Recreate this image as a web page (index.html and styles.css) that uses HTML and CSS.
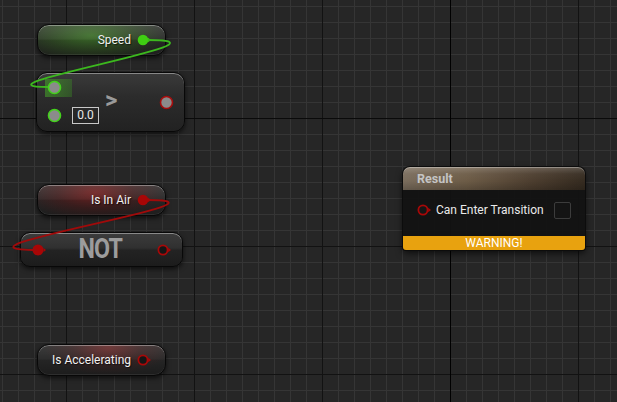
FILE: index.html
```html
<!DOCTYPE html>
<html>
<head>
<meta charset="utf-8">
<link rel="stylesheet" href="styles.css">
</head>
<body>
<div class="graph">

  <div class="node pill pill-green speed">
    <span class="label">Speed</span>
    <svg class="pin" width="15" height="12" viewBox="0 0 15 12"><circle cx="6" cy="6" r="5.3" fill="#3fcf12"/><polygon points="11,3.8 14,6 11,8.2" fill="#3fcf12"/></svg>
  </div>

  <div class="node compare">
    <div class="inputs">
      <div class="in-row">
        <span class="pin-wrap hot"><svg width="15" height="15" viewBox="0 0 15 15"><circle cx="7.5" cy="7.5" r="6" fill="#8b8b8b" stroke="#44d21c" stroke-width="1.6"/></svg></span>
      </div>
      <div class="in-row">
        <span class="pin-wrap"><svg width="15" height="15" viewBox="0 0 15 15"><circle cx="7.5" cy="7.5" r="6" fill="#8b8b8b" stroke="#44d21c" stroke-width="1.6"/></svg></span>
        <span class="valbox">0.0</span>
      </div>
    </div>
    <span class="op">&gt;</span>
    <svg class="out" width="15" height="15" viewBox="0 0 15 15"><circle cx="7.5" cy="7.5" r="6" fill="#8b8b8b" stroke="#a80c0c" stroke-width="1.6"/></svg>
  </div>

  <div class="node pill pill-red air">
    <span class="label">Is In Air</span>
    <svg class="pin" width="15" height="12" viewBox="0 0 15 12"><circle cx="6" cy="6" r="5.3" fill="#a80606"/><polygon points="11,3.8 14,6 11,8.2" fill="#a80606"/></svg>
  </div>

  <div class="node notnode">
    <svg width="16" height="12" viewBox="0 0 16 12"><circle cx="6" cy="6" r="5.5" fill="#a80606"/><polygon points="11.5,4 14,6 11.5,8" fill="#a80606"/></svg>
    <span class="nottext">NOT</span>
    <svg width="16" height="12" viewBox="0 0 16 12"><circle cx="6" cy="6" r="4.6" fill="#161616" stroke="#a80808" stroke-width="1.8"/><polygon points="11.2,3.8 14,6 11.2,8.2" fill="#a80808"/></svg>
  </div>

  <div class="node pill pill-red2 accel">
    <span class="label">Is Accelerating</span>
    <svg class="pin" width="15" height="12" viewBox="0 0 15 12"><circle cx="6" cy="6" r="4.6" fill="#161616" stroke="#a80808" stroke-width="1.8"/><polygon points="11.2,3.8 14,6 11.2,8.2" fill="#a80808"/></svg>
  </div>

  <div class="node result">
    <div class="res-head">Result</div>
    <div class="res-body">
      <svg width="16" height="12" viewBox="0 0 16 12"><circle cx="6" cy="6" r="4.6" fill="#161616" stroke="#a80808" stroke-width="1.8"/><polygon points="11.2,3.8 14,6 11.2,8.2" fill="#a80808"/></svg>
      <span class="res-label">Can Enter Transition</span>
      <span class="check"></span>
    </div>
    <div class="warn">WARNING!</div>
  </div>

  <svg class="wires" width="617" height="402" viewBox="0 0 617 402">
    <path d="M148 40 C 250 40, -40 87, 48 87" fill="none" stroke="#3cb81e" stroke-width="1.8"/>
    <path d="M148 200 C 252 200, -75 250, 37 250" fill="none" stroke="#a00a0a" stroke-width="1.8"/>
  </svg>
</div>
</body>
</html>
```

FILE: styles.css
```css
html, body {
  margin: 0;
  padding: 0;
}
body {
  width: 617px;
  height: 402px;
  overflow: hidden;
  font-family: Roboto, "Liberation Sans", sans-serif;
}
.graph {
  position: relative;
  width: 617px;
  height: 402px;
  background-color: #262626;
  background-image:
    linear-gradient(90deg, #000 1px, transparent 1px),
    linear-gradient(180deg, #0a0a0a 1px, transparent 1px),
    linear-gradient(90deg, #121212 1px, transparent 1px),
    linear-gradient(180deg, #121212 1px, transparent 1px),
    linear-gradient(90deg, #353535 1px, transparent 1px),
    linear-gradient(180deg, #353535 1px, transparent 1px);
  background-size:
    617px 100%,
    100% 402px,
    128px 100%,
    100% 128px,
    16px 100%,
    100% 16px;
  background-position:
    450px 0,
    0 118px,
    66px 0,
    0 118px,
    2px 0,
    0 6px;
  background-repeat: no-repeat, no-repeat, repeat, repeat, repeat, repeat;
}
.node {
  position: absolute;
  box-sizing: border-box;
}
.wires {
  position: absolute;
  left: 0;
  top: 0;
  pointer-events: none;
}

/* pill variable nodes */
.pill {
  width: 129px;
  height: 32px;
  border: 1px solid #080808;
  border-radius: 12px;
  display: flex;
  align-items: center;
  justify-content: flex-end;
  padding-right: 13px;
  gap: 6px;
  box-shadow: inset 0 1px 0 rgba(255,255,255,0.35), inset 0 -1px 0 rgba(255,255,255,0.08), 0 2px 5px rgba(0,0,0,0.65);
}
.pill .label {
  color: #f0f0f0;
  font-size: 12px;
  text-shadow: 1px 1px 1px rgba(0,0,0,0.6);
  margin-top: -1px;
}
.pill .pin { display: block; }
.pill-green {
  background:
    linear-gradient(180deg, rgba(255,255,255,0.14) 0%, rgba(255,255,255,0.05) 46%, rgba(0,0,0,0.05) 52%, rgba(0,0,0,0.25) 100%),
    radial-gradient(ellipse 60% 95% at 42% 35%, rgba(70,150,40,0.62) 0%, rgba(60,130,30,0.32) 55%, rgba(60,130,30,0) 100%),
    #272727;
}
.pill-red {
  background:
    linear-gradient(180deg, rgba(255,255,255,0.12) 0%, rgba(255,255,255,0.04) 46%, rgba(0,0,0,0.05) 52%, rgba(0,0,0,0.25) 100%),
    radial-gradient(ellipse 55% 95% at 45% 25%, rgba(140,28,28,0.7) 0%, rgba(110,20,20,0.35) 55%, rgba(110,20,20,0) 100%),
    #272727;
}
.pill-red2 {
  background:
    linear-gradient(180deg, rgba(255,255,255,0.1) 0%, rgba(255,255,255,0.03) 46%, rgba(0,0,0,0.05) 52%, rgba(0,0,0,0.25) 100%),
    radial-gradient(ellipse 50% 90% at 55% 10%, rgba(140,40,40,0.6) 0%, rgba(110,30,30,0.25) 55%, rgba(110,30,30,0) 100%),
    #262626;
}
.speed { left: 37px; top: 24px; }
.air { left: 37px; top: 184px; }
.accel { left: 37px; top: 344px; }

/* comparison node */
.compare {
  left: 36px;
  top: 72px;
  width: 149px;
  height: 60px;
  border: 1px solid #080808;
  border-radius: 11px;
  background: linear-gradient(180deg, #3a3a3a 0%, #2c2c2c 40%, #222 100%);
  box-shadow: inset 0 1px 0 rgba(255,255,255,0.4), 0 2px 5px rgba(0,0,0,0.65);
  display: flex;
  align-items: center;
  padding: 0 10px 0 8px;
}
.inputs {
  display: flex;
  flex-direction: column;
  margin-top: -1px;
}
.in-row {
  height: 28px;
  display: flex;
  align-items: center;
}
.pin-wrap {
  width: 27px;
  height: 18px;
  box-sizing: border-box;
  padding-left: 2px;
  display: flex;
  align-items: center;
}
.pin-wrap svg { display: block; }
.pin-wrap.hot {
  background: linear-gradient(90deg, rgba(70,170,40,0.55), rgba(60,150,35,0.35));
}
.valbox {
  box-sizing: border-box;
  width: 27px;
  height: 17px;
  border: 1px solid #c8c8c8;
  color: #e8e8e8;
  font-size: 12px;
  line-height: 15px;
  text-align: center;
  margin-top: -1px;
}
.op {
  color: #9a9a9a;
  font-weight: bold;
  font-size: 24px;
  margin-left: 6px;
  margin-top: -4px;
}
.compare .out {
  display: block;
  margin-left: auto;
}

/* NOT node */
.notnode {
  left: 20px;
  top: 232px;
  width: 163px;
  height: 35px;
  border: 1px solid #080808;
  border-radius: 10px;
  background: linear-gradient(180deg, #3c3c3c 0%, #303030 45%, #232323 52%, #1c1c1c 100%);
  box-shadow: inset 0 1px 0 rgba(255,255,255,0.4), 0 2px 5px rgba(0,0,0,0.65);
  display: flex;
  align-items: center;
  justify-content: space-between;
  padding: 0 9px 0 11px;
}
.notnode svg { display: block; }
.nottext {
  color: #9c9c9c;
  font-weight: bold;
  font-size: 27px;
  letter-spacing: -1px;
  transform: scaleX(0.86);
  margin-top: -1px;
  margin-left: -4px;
}

/* result node */
.result {
  left: 403px;
  top: 167px;
  width: 182px;
  height: 83px;
  border-radius: 7px 7px 3px 3px;
  background: rgba(18,18,18,0.93);
  box-shadow: 0 0 0 1px #0c0c0c, 0 3px 7px rgba(0,0,0,0.7);
  display: flex;
  flex-direction: column;
}
.res-head {
  height: 23px;
  border-radius: 7px 7px 0 0;
  background:
    linear-gradient(180deg, rgba(255,255,255,0.2) 0%, rgba(255,255,255,0.04) 30%, rgba(0,0,0,0) 60%, rgba(0,0,0,0.2) 100%),
    linear-gradient(90deg, #7a6d5d 0%, #6d5c47 35%, #4e3f30 70%, #352b20 100%);
  color: #c4c4c4;
  font-weight: bold;
  font-size: 12.5px;
  line-height: 24px;
  padding-left: 14px;
  box-shadow: inset 0 1px 0 rgba(255,255,255,0.3);
}
.res-body {
  flex: 1;
  display: flex;
  align-items: center;
  padding: 0 14px 6px 14px;
}
.res-body svg { display: block; }
.res-label {
  color: #eaeaea;
  font-size: 12px;
  margin-left: 3px;
}
.check {
  width: 17px;
  height: 17px;
  box-sizing: border-box;
  border: 1px solid #3c3c3c;
  border-radius: 2px;
  background: #141414;
  margin-left: auto;
}
.warn {
  height: 14px;
  background: #e8a20f;
  color: #fff;
  font-size: 12px;
  line-height: 14px;
  text-align: center;
  border-radius: 0 0 3px 3px;
}
```
